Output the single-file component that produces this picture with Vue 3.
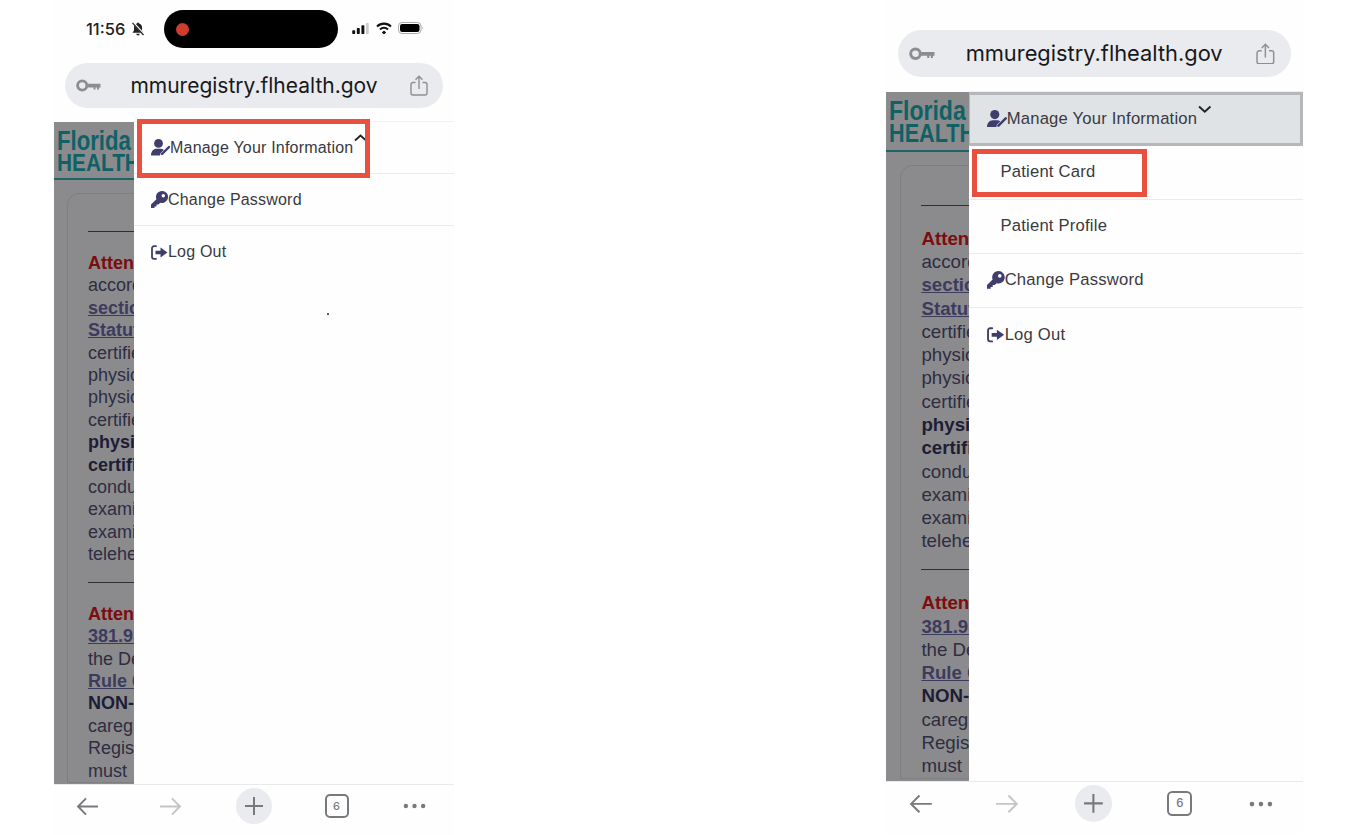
<script setup>
// left column text that peeks out behind the drawer
const notice1 = [
  { t: 'Attention:', c: 'red' },
  { t: 'according' },
  { t: 'section', c: 'link' },
  { t: 'Statutes', c: 'link' },
  { t: 'certified' },
  { t: 'physician' },
  { t: 'physician' },
  { t: 'certified' },
  { t: 'physician', c: 'bold' },
  { t: 'certified', c: 'bold' },
  { t: 'conducts' },
  { t: 'examination' },
  { t: 'examination' },
  { t: 'telehealth' }
]
const notice2 = [
  { t: 'Attention', c: 'red' },
  { t: '381.986', c: 'link' },
  { t: 'the Dept' },
  { t: 'Rule 64', c: 'link' },
  { t: 'NON-', c: 'bold' },
  { t: 'caregiver' },
  { t: 'Registry' },
  { t: 'must' }
]

const phones = [
  {
    id: 'left',
    open: false,
    items: [
      { label: 'Change Password', icon: 'key' },
      { label: 'Log Out', icon: 'out' }
    ]
  },
  {
    id: 'right',
    open: true,
    items: [
      { label: 'Patient Card', sub: true, mark: true },
      { label: 'Patient Profile', sub: true },
      { label: 'Change Password', icon: 'key' },
      { label: 'Log Out', icon: 'out' }
    ]
  }
]
</script>

<template>
  <div class="screen">
    <div v-for="p in phones" :key="p.id" class="phone" :class="'phone-' + p.id">
      <div v-if="!p.open" class="status">
        <span class="time">11:56</span>
        <svg class="bell" viewBox="0 0 14 14">
          <path d="M7 .5a1 1 0 0 1 1 1c2 .5 3 2 3 4v3l1.500 2.300H1.500L3 8.500v-3c0-2 1-3.500 3-4a1 1 0 0 1 1-1zM5.300 11.800h3.400a1.700 1.700 0 0 1-3.400 0z" fill="#222" />
          <path d="M2 .5l11 12" stroke="#fff" stroke-width="2.200" />
          <path d="M1.500 .8l11 12.200" stroke="#222" stroke-width="1.200" />
        </svg>
        <div class="island"><span class="rec"></span></div>
        <svg class="signal" viewBox="0 0 18 12">
          <rect x="0" y="8" width="3.200" height="4" rx=".7" fill="#111" />
          <rect x="5" y="5.500" width="3.200" height="6.500" rx=".7" fill="#111" />
          <rect x="10" y="2.500" width="3.200" height="9.500" rx=".7" fill="#111" />
          <rect x="15" y="0" width="3" height="12" rx=".7" fill="#ccc" />
        </svg>
        <svg class="wifi" viewBox="0 0 16 12">
          <path d="M8 8.500l2.200 2L8 12.500l-2.200-2z" fill="#111" />
          <path d="M3.300 6.700a6.700 6.700 0 0 1 9.400 0L11.300 8.200a4.700 4.700 0 0 0-6.600 0z" fill="#111" />
          <path d="M.3 3.700a11 11 0 0 1 15.400 0L14.300 5.200a9 9 0 0 0-12.600 0z" fill="#111" />
        </svg>
        <svg class="battery" viewBox="0 0 26 12">
          <rect x=".5" y=".5" width="22.500" height="11" rx="3.500" fill="none" stroke="#aaa" />
          <rect x="2" y="2" width="19.500" height="8" rx="2.200" fill="#000" />
          <path d="M24.500 4.500c.9.300.9 2.700 0 3z" fill="#aaa" />
        </svg>
      </div>

      <div class="url-bar">
        <svg class="url-key" viewBox="0 0 25 13">
          <circle cx="6.200" cy="6.500" r="4.600" fill="none" stroke="#8b8d90" stroke-width="2.800" />
          <path d="M11 4.800h13.500v3.700h-1.500v2h-2v-2h-1.500v2h-2v-2H11z" fill="#8b8d90" />
        </svg>
        <span class="url-text">mmuregistry.flhealth.gov</span>
        <svg class="url-share" viewBox="0 0 18 21">
          <path d="M5.500 7.500H3a2 2 0 0 0-2 2V18a2 2 0 0 0 2 2h12a2 2 0 0 0 2-2V9.500a2 2 0 0 0-2-2h-2.500" fill="none" stroke="#8e8f92" stroke-width="1.400" />
          <path d="M9 14V1.500M5.500 4.800L9 1.300l3.500 3.500" fill="none" stroke="#8e8f92" stroke-width="1.400" />
        </svg>
      </div>

      <div class="page">
        <div class="behind">
          <div class="logo">
            <span class="logo-top">Florida</span>
            <span class="logo-bottom">HEALTH</span>
          </div>
          <div class="card">
            <div class="rule"></div>
            <div v-for="(l, i) in notice1" :key="i" class="line" :class="l.c">{{ l.t }}</div>
            <div class="rule rule-mid"></div>
            <div v-for="(l, i) in notice2" :key="'b' + i" class="line" :class="l.c">{{ l.t }}</div>
          </div>
        </div>

        <div class="drawer">
          <div class="row row-main" :class="{ active: p.open }">
            <svg class="ico ico-user" viewBox="0 0 20 17">
              <circle cx="7.500" cy="4.400" r="4.400" fill="#3f3d6b" />
              <path d="M0 16.500c0-4 2.500-6.700 5.500-6.700h4c1.300 0 2.400.4 3.300 1.100L9.500 14.200 9 16.500z" fill="#3f3d6b" />
              <path d="M11 15l7-7" stroke="#3f3d6b" stroke-width="2.400" stroke-linecap="round" />
            </svg>
            <span class="main-label">Manage Your Information</span>
            <svg class="chev" viewBox="0 0 13 8">
              <path :d="p.open ? 'M1 1.500l5.500 5 5.500-5' : 'M1 6.500l5.500-5 5.500 5'" fill="none" stroke="#222" stroke-width="1.800" />
            </svg>
            <div v-if="!p.open" class="mark mark-main"></div>
          </div>

          <div v-for="it in p.items" :key="it.label" class="row" :class="{ 'row-sub': it.sub }">
            <svg v-if="it.icon === 'key'" class="ico ico-key" viewBox="0 0 17 17">
              <path d="M11 0a6 6 0 1 1-1.800 11.700L7.500 13.500H5.500v2H3.500V17H0v-3.500l5.400-5.300A6 6 0 0 1 11 0zm1.300 3a1.700 1.700 0 1 0 0 3.400 1.700 1.700 0 0 0 0-3.400z" fill="#3f3d6b" />
            </svg>
            <svg v-if="it.icon === 'out'" class="ico ico-key" viewBox="0 0 17 15">
              <path d="M5 1.200H3A2 2 0 0 0 1 3.200v8.600a2 2 0 0 0 2 2h2" fill="none" stroke="#3f3d6b" stroke-width="1.800" stroke-linecap="round" />
              <path d="M4.500 5.700h5V2.500l7 5-7 5V9.300h-5z" fill="#3f3d6b" />
            </svg>
            <span>{{ it.label }}</span>
            <div v-if="it.mark" class="mark mark-sub"></div>
          </div>

          <span v-if="!p.open" class="cursor-dot"></span>
        </div>
      </div>

      <div class="toolbar">
        <svg class="tool" viewBox="0 0 24 20">
          <path d="M23 10H2M10.500 1.500L2 10l8.500 8.500" fill="none" stroke="#77797c" stroke-width="2" />
        </svg>
        <svg class="tool" viewBox="0 0 24 20">
          <path d="M1 10h21M13.500 1.500L22 10l-8.500 8.500" fill="none" stroke="#c4c5c7" stroke-width="2" />
        </svg>
        <div class="plus">
          <svg viewBox="0 0 20 20">
            <path d="M10 1v18M1 10h18" fill="none" stroke="#77797c" stroke-width="2" />
          </svg>
        </div>
        <div class="tabs">6</div>
        <svg class="tool dots" viewBox="0 0 24 6">
          <circle cx="3" cy="3" r="2.300" fill="#77797c" />
          <circle cx="12" cy="3" r="2.300" fill="#77797c" />
          <circle cx="21" cy="3" r="2.300" fill="#77797c" />
        </svg>
      </div>
    </div>
  </div>
</template>

<style>
html,
body {
  margin: 0;
  background: #fff;
}
</style>

<style scoped>
.screen {
  width: 1366px;
  height: 835px;
  overflow: hidden;
  display: flex;
  align-items: flex-start;
  background: #fff;
  font-family: "Liberation Sans", Arial, sans-serif;
}

.phone {
  width: 400px;
  flex-shrink: 0;
  margin-left: 54px;
  background: #fefefe;
}

/* second phone is the same recording shown slightly bigger */
.phone-right {
  zoom: 1.04;
  width: 401px;
  margin-left: 415.500px;
  padding-top: 29px;
}

.status {
  height: 63px;
  box-sizing: border-box;
  padding: 10px 0 0 32px;
  display: flex;
  align-items: flex-start;
}

.time {
  width: 45px;
  margin-top: 9px;
  font: 500 16.500px/20px Inter, sans-serif;
  color: #222;
}

.bell {
  width: 14px;
  height: 14px;
  margin-top: 12px;
}

.island {
  width: 174px;
  height: 38px;
  margin-left: 19px;
  border-radius: 19px;
  background: #000;
  display: flex;
  align-items: center;
  padding-left: 12px;
  box-sizing: border-box;
}

.rec {
  width: 13px;
  height: 13px;
  border-radius: 50%;
  background: #d13c2f;
}

.signal {
  width: 17px;
  height: 11px;
  margin: 13px 0 0 14px;
}

.wifi {
  width: 16px;
  height: 12px;
  margin: 12px 0 0 7px;
}

.battery {
  width: 26px;
  height: 12px;
  margin: 12px 0 0 6px;
}

.url-bar {
  width: 378px;
  height: 45px;
  margin-left: 11px;
  padding: 0 15px 0 15px;
  box-sizing: border-box;
  border-radius: 23px;
  background: #e9ebee;
  display: grid;
  grid-template-columns: 1fr auto 1fr;
  align-items: center;
}

.url-key {
  width: 25px;
  height: 13px;
  margin-left: -4px;
}

.url-text {
  font: 400 21px/45px Inter, sans-serif;
  color: #17181a;
  white-space: nowrap;
}

.url-share {
  width: 18px;
  height: 21px;
  justify-self: end;
}

.page {
  height: 662px;
  margin-top: 14px;
  display: flex;
}

.phone-right .page {
  height: 662.800px;
}

.behind {
  width: 80px;
  flex-shrink: 0;
  overflow: hidden;
  background: #8b8b8d;
}

.logo {
  height: 58px;
  box-sizing: border-box;
  padding: 8px 0 0 3px;
  border-bottom: 2px solid #1c6468;
  display: flex;
  flex-direction: column;
  align-items: flex-start;
  color: #0e6266;
  font-weight: 700;
  white-space: nowrap;
}

/* no narrow face installed, so squeeze the bold one */
.logo-top {
  font-size: 27px;
  line-height: 22px;
  transform: scaleX(0.82);
  transform-origin: left center;
}

.logo-bottom {
  font-size: 24.500px;
  line-height: 21px;
  transform: scaleX(0.85);
  transform-origin: left center;
}

.card {
  width: 200px;
  margin: 13px 0 0 13px;
  padding: 37px 0 0 20px;
  border: 1px solid #7e7e82;
  border-radius: 12px 0 0 0;
}

.rule {
  height: 1px;
  margin-bottom: 20px;
  background: #2f2f33;
}

.rule-mid {
  margin-top: 16px;
}

.line {
  font-size: 18px;
  line-height: 22.400px;
  white-space: nowrap;
  color: #2e2d42;
}

.red {
  font-weight: 700;
  color: #7c0c0e;
}

.link {
  font-weight: 700;
  color: #3c3b5e;
  text-decoration: underline;
}

.bold {
  font-weight: 700;
  color: #1e1d36;
}

.drawer {
  flex: 1;
  position: relative;
  background: #fefefe;
  box-shadow: 0 -1px 0 #f0f0f2;
}

.row {
  position: relative;
  height: 52px;
  box-sizing: border-box;
  padding-left: 17px;
  display: flex;
  align-items: center;
  border-bottom: 1px solid #e9ebed;
  font-size: 16px;
  letter-spacing: 0.200px;
  color: #3a3a3e;
  white-space: nowrap;
}

.row:last-of-type {
  border-bottom: none;
}

.row-sub {
  padding-left: 30px;
}

.row-main.active {
  background: #dfe3e6;
  border: 3px solid #b5b8bb;
  border-left-width: 1px;
  padding-left: 16px;
}

.ico {
  flex-shrink: 0;
}

.ico-user {
  width: 20px;
  height: 17px;
  margin-right: -1px;
}

.ico-key {
  width: 17px;
  height: 17px;
}

.chev {
  width: 13px;
  height: 8px;
  margin: -19px 0 0 1px;
}

.mark {
  position: absolute;
  box-sizing: border-box;
  border: 5px solid #e9503f;
}

.mark-main {
  left: 3px;
  top: -3px;
  width: 233px;
  height: 59px;
}

.mark-sub {
  left: 3px;
  top: 3px;
  width: 168px;
  height: 46px;
}

.cursor-dot {
  position: absolute;
  left: 193px;
  top: 191px;
  width: 2px;
  height: 2px;
  border-radius: 50%;
  background: #222;
}

.toolbar {
  height: 51px;
  box-sizing: border-box;
  padding-bottom: 7px;
  margin-left: -8px;
  margin-right: -8px;
  display: grid;
  grid-template-columns: repeat(5, 83px);
  justify-items: center;
  align-items: center;
  position: relative;
}

.toolbar::before {
  content: "";
  position: absolute;
  left: 8px;
  right: 8px;
  top: 0;
  height: 1px;
  background: #e8e9eb;
}

.tool {
  width: 23px;
  height: 19px;
}

.dots {
  height: 6px;
  margin-left: -10px;
}

.plus {
  width: 36px;
  height: 36px;
  border-radius: 50%;
  background: #e9ebee;
  display: flex;
  align-items: center;
  justify-content: center;
}

.plus svg {
  width: 20px;
  height: 20px;
}

.tabs {
  width: 24px;
  height: 24px;
  box-sizing: border-box;
  border: 2px solid #77797c;
  border-radius: 5px;
  font: 500 11px/20px Inter, sans-serif;
  text-align: center;
  color: #77797c;
}
</style>
